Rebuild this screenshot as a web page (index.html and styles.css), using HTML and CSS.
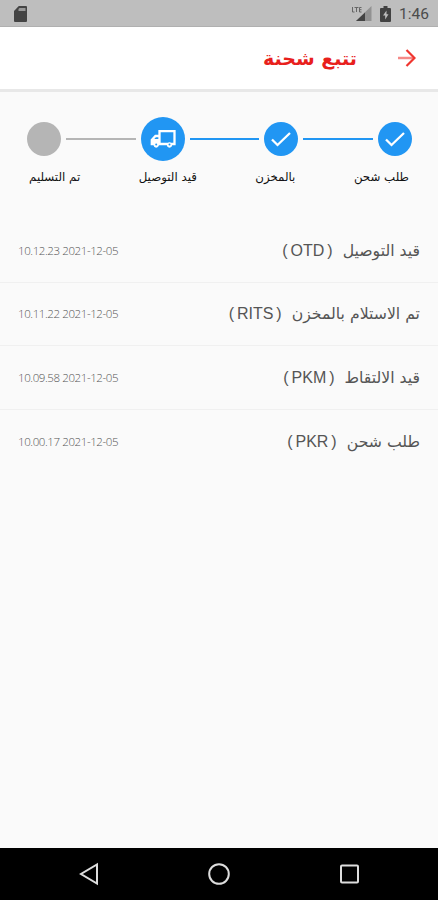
FILE: index.html
```html
<!DOCTYPE html>
<html lang="ar" dir="rtl">
<head>
    <meta charset="UTF-8">
    <title>تتبع شحنة</title>
    <link rel="stylesheet" href="styles.css">
</head>
<body>
    <div class="status-bar">
        <svg class="sd-icon" width="13" height="16" viewBox="0 0 13 16">
            <path d="M4.8 0H12q1 0 1 1v14q0 1-1 1H1q-1 0-1-1V5z" fill="#444"/>
            <path d="M5.5 2h6v3h-7V3z" fill="#999"/>
        </svg>
        <div class="status-right">
            <svg class="signal" width="22" height="18" viewBox="0 0 22 18">
                <path d="M20.500 1v15H5z" fill="#929292"/>
                <path d="M14 7.500V16H5z" fill="#444"/>
                <path d="M1.500 2v5h2M3.500 2.500h4M5.500 2.500V7M10.500 2.500H8.500V7H10.500M8.500 4.700h2" fill="none" stroke="#666"/>
            </svg>
            <svg class="battery" width="11" height="16" viewBox="0 0 11 16">
                <path d="M3.500 0h4v2H10q1 0 1 1v12q0 1-1 1H1q-1 0-1-1V3q0-1 1-1h2.500z" fill="#424242"/>
                <path d="M6.500 4.500L3 9.500h2.200V13.500L8.500 8.300H6.500z" fill="#bdbdbd"/>
            </svg>
            <span class="clock">1:46</span>
        </div>
    </div>

    <div class="header">
        <svg width="18" height="18" viewBox="0 0 18 18">
            <path d="M0 9h15" stroke="#f58a88" stroke-width="2.500"/>
            <path d="M8.500 1l8 8-8 8" fill="none" stroke="#f0352f" stroke-width="2.200"/>
        </svg>
        <h1>تتبع شحنة</h1>
    </div>

    <div class="tracker">
        <div class="steps">
            <div class="step done">
                <svg width="20" height="16" viewBox="0 0 20 16"><path d="M1 8.500l5.500 5.500L19 2" /></svg>
            </div>
            <div class="line done"></div>
            <div class="step done">
                <svg width="20" height="16" viewBox="0 0 20 16"><path d="M1 8.500l5.500 5.500L19 2" /></svg>
            </div>
            <div class="line done"></div>
            <div class="step current">
                <svg class="truck" width="26" height="20" viewBox="0 0 26 20">
                    <path d="M9.500 15V2.200h15V15h-15V7H5.500L1.800 11v4h8" />
                    <path d="M2 10.500h7.500V15H2z" class="solid"/>
                    <circle cx="6.200" cy="16" r="2.200" class="solid"/>
                    <circle cx="19.500" cy="16" r="2.200" class="solid"/>
                    <circle cx="6.200" cy="15.600" r="1" class="hub"/>
                    <circle cx="19.500" cy="15.600" r="1" class="hub"/>
                </svg>
            </div>
            <div class="line"></div>
            <div class="step"></div>
        </div>
        <div class="step-labels">
            <span>طلب شحن</span>
            <span>بالمخزن</span>
            <span>قيد التوصيل</span>
            <span>تم التسليم</span>
        </div>
    </div>

    <div class="history">
        <div class="row">
            <div class="state"><span>قيد التوصيل</span><span class="code" dir="ltr">( OTD )</span></div>
            <div class="date" dir="ltr">10.12.23 2021-12-05</div>
        </div>
        <div class="row">
            <div class="state"><span>تم الاستلام بالمخزن</span><span class="code" dir="ltr">( RITS )</span></div>
            <div class="date" dir="ltr">10.11.22 2021-12-05</div>
        </div>
        <div class="row">
            <div class="state"><span>قيد الالتقاط</span><span class="code" dir="ltr">( PKM )</span></div>
            <div class="date" dir="ltr">10.09.58 2021-12-05</div>
        </div>
        <div class="row">
            <div class="state"><span>طلب شحن</span><span class="code" dir="ltr">( PKR )</span></div>
            <div class="date" dir="ltr">10.00.17 2021-12-05</div>
        </div>
    </div>

    <div class="nav-bar">
        <svg width="20" height="24" viewBox="0 0 20 24"><rect x="2" y="3.500" width="17" height="17" rx="1"/></svg>
        <svg width="24" height="24" viewBox="0 0 24 24"><circle cx="12" cy="12" r="9.800"/></svg>
        <svg width="20" height="24" viewBox="0 0 20 24"><path d="M18 2.500v19L2 12z"/></svg>
    </div>
</body>
</html>
```
FILE: styles.css
```css
* {
    box-sizing: border-box;
}
body {
    margin: 0;
    height: 900px;
    display: flex;
    flex-direction: column;
    background-color: #fafafa;
    font-family: "DejaVu Sans", sans-serif;
    overflow: hidden;
}
.status-bar {
    height: 27px;
    padding: 2px 9px 0 14px;
    background-color: #bebebe;
    border-bottom: 1px solid #b0b0b0;
    display: flex;
    flex-direction: row-reverse;
    justify-content: space-between;
    align-items: center;
}
.status-right {
    direction: ltr;
    display: flex;
    align-items: center;
}
.battery {
    margin: 0 8px 0 7px;
}
.clock {
    font-family: Roboto, sans-serif;
    font-size: 15.5px;
    color: #4c4c4c;
}
.header {
    height: 65px;
    padding: 0 22px;
    background-color: #fff;
    border-bottom: 3px solid #e8e8e8;
    display: flex;
    align-items: center;
    gap: 41px;
}
.header h1 {
    margin: 0;
    font-size: 19px;
    font-weight: bold;
    color: #e8201c;
}
.tracker {
    height: 127px;
    padding-top: 24px;
}
.steps {
    height: 45px;
    padding: 0 26px 0 27px;
    display: flex;
    align-items: center;
    gap: 5px;
}
.step {
    width: 34px;
    height: 34px;
    border-radius: 50%;
    background-color: #b5b5b5;
    display: flex;
    align-items: center;
    justify-content: center;
}
.step svg {
    fill: none;
    stroke: #fff;
    stroke-width: 2.3;
}
.truck .solid {
    fill: #fff;
    stroke-width: 1;
}
.truck .hub {
    fill: #2196f3;
    stroke: none;
}
.step.done, .line.done {
    background-color: #2196f3;
}
.step.current {
    width: 44px;
    height: 44px;
    background-color: #2196f3;
}
.line {
    flex: 1;
    height: 2px;
    background-color: #b5b5b5;
}
.step-labels {
    height: 30px;
    margin-top: 1px;
    padding: 0 29px;
    display: flex;
    justify-content: space-between;
    align-items: center;
    font-size: 11.8px;
    color: #111;
}
.row {
    height: 63.5px;
    padding: 0 18px;
    display: flex;
    justify-content: space-between;
    align-items: center;
    border-bottom: 1px solid #f0f0f0;
}
.row:last-child {
    border-bottom: none;
}
.state {
    display: flex;
    align-items: center;
    gap: 10px;
    font-size: 15.7px;
    color: #555;
}
.code {
    padding-top: 1px;
    font-family: "Liberation Sans", sans-serif;
    font-size: 16px;
    word-spacing: -1.5px;
}
.date {
    font-family: "Open Sans", sans-serif;
    font-size: 11.5px;
    font-weight: 300;
    letter-spacing: -0.4px;
    color: #555;
}
.nav-bar {
    height: 52px;
    margin-top: auto;
    padding: 0 79px;
    background-color: #000;
    display: flex;
    justify-content: space-between;
    align-items: center;
}
.nav-bar svg {
    fill: none;
    stroke: #ddd;
    stroke-width: 2;
}
```
